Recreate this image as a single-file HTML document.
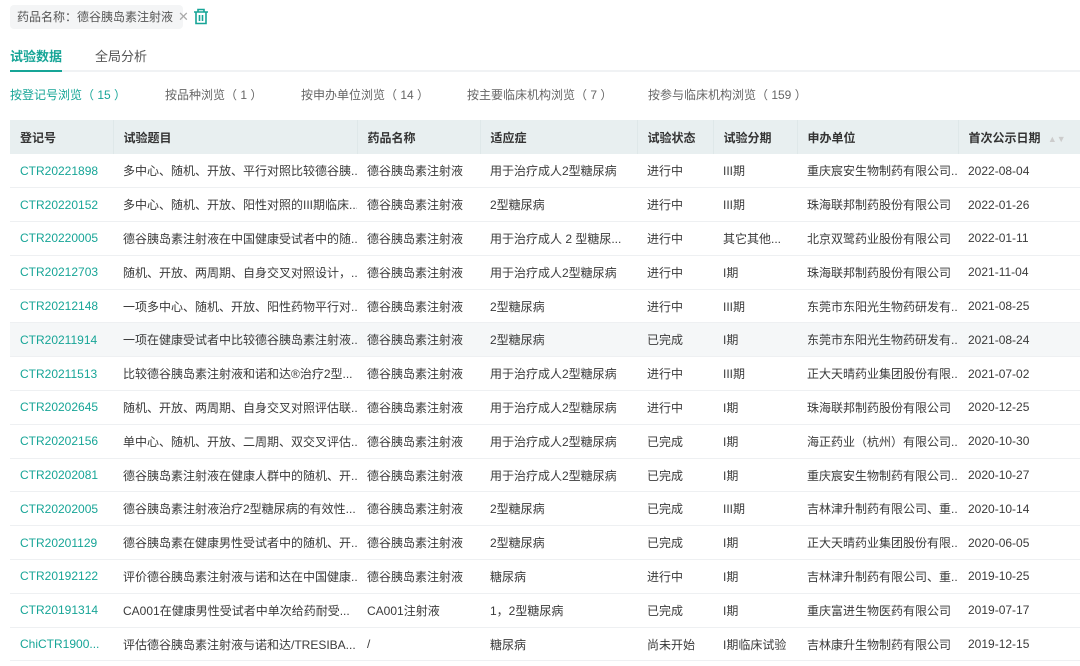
<!DOCTYPE html>
<html><head><meta charset="utf-8"><style>
*{margin:0;padding:0;box-sizing:border-box}
body{width:1080px;height:666px;overflow:hidden;background:#fff;font-family:"Liberation Sans","Noto Sans CJK SC",sans-serif;font-size:12px;color:#333}
.tag{position:absolute;left:10px;top:5px;width:173px;height:24px;padding:0 0 0 7px;background:#f4f5f6;border-radius:4px;line-height:24px;color:#555;font-size:12px;white-space:nowrap}
.tag span{color:#aaa;margin-left:5px;font-size:13px}
.trash{position:absolute;left:193px;top:8px}
.tabs{position:absolute;left:10px;top:46px;width:1070px;height:26px;border-bottom:2px solid #f0f2f4}
.tab{position:absolute;top:0;font-size:13px;color:#555}
.tab.on{color:#17a597;border-bottom:2px solid #17a597;height:26px;font-weight:bold}
.sub{position:absolute;top:86px;font-size:12px;color:#666}
.sub.on{color:#17a597}
table{position:absolute;left:10px;top:120px;width:1070px;border-collapse:collapse;table-layout:fixed}
th{background:#e8eff0;height:34px;text-align:left;font-weight:bold;padding-left:10px;border-right:1px solid #dfe8e9;color:#333}
td{height:33.8px;padding-left:10px;border-bottom:1px solid #eef0f2;white-space:nowrap;overflow:hidden;color:#3a3a3a}
td:first-child{color:#17a597}
tr.g td{background:#f5f7f8}
</style></head><body>
<div class="tag">药品名称：德谷胰岛素注射液<span>✕</span></div>
<svg class="trash" width="16" height="17" viewBox="0 0 16 17" fill="none" stroke="#17a597" stroke-width="1.6"><path d="M1 4h14M5 4V1.5h6V4M3 4v11.5h10V4M6.5 7v6M9.5 7v6"/></svg>
<div class="tabs"><div class="tab on" style="left:0">试验数据</div><div class="tab" style="left:85px">全局分析</div></div>
<div class="sub on" style="left:10px">按登记号浏览（ 15 ）</div>
<div class="sub" style="left:165px">按品种浏览（ 1 ）</div>
<div class="sub" style="left:301px">按申办单位浏览（ 14 ）</div>
<div class="sub" style="left:467px">按主要临床机构浏览（ 7 ）</div>
<div class="sub" style="left:648px">按参与临床机构浏览（ 159 ）</div>
<table>
<colgroup><col style="width:103px"><col style="width:244px"><col style="width:123px"><col style="width:157px"><col style="width:76px"><col style="width:84px"><col style="width:161px"><col style="width:122px"></colgroup>
<tr><th>登记号</th><th>试验题目</th><th>药品名称</th><th>适应症</th><th>试验状态</th><th>试验分期</th><th>申办单位</th><th style="border-right:none">首次公示日期 <span style="color:#ccc;font-size:9px;margin-left:4px">▲▼</span></th></tr>
<tr><td>CTR20221898</td><td>多中心、随机、开放、平行对照比较德谷胰...</td><td>德谷胰岛素注射液</td><td>用于治疗成人2型糖尿病</td><td>进行中</td><td>III期</td><td>重庆宸安生物制药有限公司...</td><td>2022-08-04</td></tr>
<tr><td>CTR20220152</td><td>多中心、随机、开放、阳性对照的III期临床...</td><td>德谷胰岛素注射液</td><td>2型糖尿病</td><td>进行中</td><td>III期</td><td>珠海联邦制药股份有限公司</td><td>2022-01-26</td></tr>
<tr><td>CTR20220005</td><td>德谷胰岛素注射液在中国健康受试者中的随...</td><td>德谷胰岛素注射液</td><td>用于治疗成人 2 型糖尿...</td><td>进行中</td><td>其它其他...</td><td>北京双鹭药业股份有限公司</td><td>2022-01-11</td></tr>
<tr><td>CTR20212703</td><td>随机、开放、两周期、自身交叉对照设计，...</td><td>德谷胰岛素注射液</td><td>用于治疗成人2型糖尿病</td><td>进行中</td><td>I期</td><td>珠海联邦制药股份有限公司</td><td>2021-11-04</td></tr>
<tr><td>CTR20212148</td><td>一项多中心、随机、开放、阳性药物平行对...</td><td>德谷胰岛素注射液</td><td>2型糖尿病</td><td>进行中</td><td>III期</td><td>东莞市东阳光生物药研发有...</td><td>2021-08-25</td></tr>
<tr class="g"><td>CTR20211914</td><td>一项在健康受试者中比较德谷胰岛素注射液...</td><td>德谷胰岛素注射液</td><td>2型糖尿病</td><td>已完成</td><td>I期</td><td>东莞市东阳光生物药研发有...</td><td>2021-08-24</td></tr>
<tr><td>CTR20211513</td><td>比较德谷胰岛素注射液和诺和达®治疗2型...</td><td>德谷胰岛素注射液</td><td>用于治疗成人2型糖尿病</td><td>进行中</td><td>III期</td><td>正大天晴药业集团股份有限...</td><td>2021-07-02</td></tr>
<tr><td>CTR20202645</td><td>随机、开放、两周期、自身交叉对照评估联...</td><td>德谷胰岛素注射液</td><td>用于治疗成人2型糖尿病</td><td>进行中</td><td>I期</td><td>珠海联邦制药股份有限公司</td><td>2020-12-25</td></tr>
<tr><td>CTR20202156</td><td>单中心、随机、开放、二周期、双交叉评估...</td><td>德谷胰岛素注射液</td><td>用于治疗成人2型糖尿病</td><td>已完成</td><td>I期</td><td>海正药业（杭州）有限公司...</td><td>2020-10-30</td></tr>
<tr><td>CTR20202081</td><td>德谷胰岛素注射液在健康人群中的随机、开...</td><td>德谷胰岛素注射液</td><td>用于治疗成人2型糖尿病</td><td>已完成</td><td>I期</td><td>重庆宸安生物制药有限公司...</td><td>2020-10-27</td></tr>
<tr><td>CTR20202005</td><td>德谷胰岛素注射液治疗2型糖尿病的有效性...</td><td>德谷胰岛素注射液</td><td>2型糖尿病</td><td>已完成</td><td>III期</td><td>吉林津升制药有限公司、重...</td><td>2020-10-14</td></tr>
<tr><td>CTR20201129</td><td>德谷胰岛素在健康男性受试者中的随机、开...</td><td>德谷胰岛素注射液</td><td>2型糖尿病</td><td>已完成</td><td>I期</td><td>正大天晴药业集团股份有限...</td><td>2020-06-05</td></tr>
<tr><td>CTR20192122</td><td>评价德谷胰岛素注射液与诺和达在中国健康...</td><td>德谷胰岛素注射液</td><td>糖尿病</td><td>进行中</td><td>I期</td><td>吉林津升制药有限公司、重...</td><td>2019-10-25</td></tr>
<tr><td>CTR20191314</td><td>CA001在健康男性受试者中单次给药耐受...</td><td>CA001注射液</td><td>1，2型糖尿病</td><td>已完成</td><td>I期</td><td>重庆富进生物医药有限公司</td><td>2019-07-17</td></tr>
<tr><td>ChiCTR1900...</td><td>评估德谷胰岛素注射液与诺和达/TRESIBA...</td><td>/</td><td>糖尿病</td><td>尚未开始</td><td>I期临床试验</td><td>吉林康升生物制药有限公司</td><td>2019-12-15</td></tr>
</table>
</body></html>
